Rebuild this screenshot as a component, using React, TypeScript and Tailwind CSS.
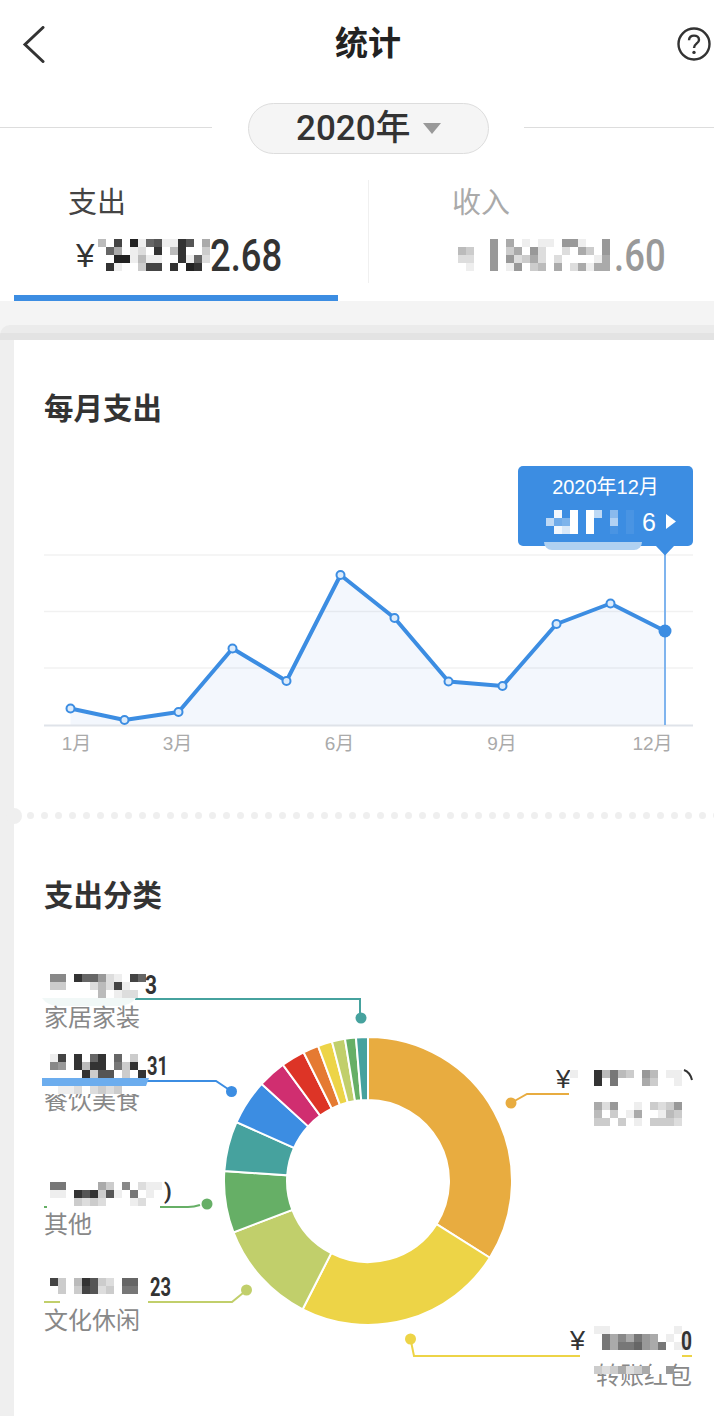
const FONT = "[font-family:'Liberation_Sans','Noto_Sans_CJK_SC',sans-serif]";
const NUM = "[font-family:'Roboto','Liberation_Sans',sans-serif]";
const YEAR = "[font-family:'Roboto','Noto_Sans_CJK_SC',sans-serif]";
const CELL = 8;

// each char is a grey level, 0 = black, f = white; "." is a hole
function Cells({ rows, x = 0, y = 0, light = false }: { rows: string[]; x?: number; y?: number; light?: boolean }) {
  return (
    <g>
      {rows.flatMap((row, r) =>
        row.split("").map((c, i) => {
          if (c === ".") return null;
          const lv = parseInt(c, 16);
          const g = lv * 17;
          return (
            <rect
              key={`${r}-${i}`}
              x={x + i * CELL}
              y={y + r * CELL}
              width={CELL}
              height={CELL}
              fill={light ? "#fff" : `rgb(${g},${g},${g})`}
              fillOpacity={light ? lv / 15 : 1}
            />
          );
        })
      )}
    </g>
  );
}

function Mosaic({ rows, light = false }: { rows: string[]; light?: boolean }) {
  return (
    <svg width={rows[0].length * CELL} height={rows.length * CELL} className="block shrink-0">
      <Cells rows={rows} light={light} />
    </svg>
  );
}

const points: [number, number][] = [
  [70.5, 708.5], [124.5, 720], [178.5, 712], [232.5, 648.5], [286.5, 681], [340.5, 575],
  [394.5, 618], [448.5, 681.5], [502.5, 686], [556.5, 624], [610.5, 603.5], [665, 631],
];

function LineChart() {
  const line = points.map((p) => p.join(",")).join(" ");
  const area = `70.5,725 ${line} 665,725`;
  return (
    <div className="relative mt-[31px] h-[330px]">
      <svg width="700" height="330" viewBox="14 460 700 330" className="block">
        <polygon points={area} fill="#f3f7fd" />
        {[555, 611.5, 668].map((y) => (
          <line key={y} x1="44" x2="693" y1={y} y2={y} stroke="#000" strokeOpacity="0.055" strokeWidth="1.4" />
        ))}
        <line x1="44" x2="693" y1="725.5" y2="725.5" stroke="#dfe3e9" strokeWidth="2" />
        <line x1="665" x2="665" y1="550" y2="725" stroke="#7fb4ee" strokeWidth="2" />
        <polyline points={line} fill="none" stroke="#3c8de2" strokeWidth="4" strokeLinejoin="round" />
        {points.slice(0, 11).map(([x, y]) => (
          <circle key={x} cx={x} cy={y} r="4" fill="#dcebfb" stroke="#3c8de2" strokeWidth="2" />
        ))}
        <circle cx="665" cy="631" r="6.5" fill="#3c8de2" />
        {[["1月", 76.5], ["3月", 177.5], ["6月", 339.5], ["9月", 502], ["12月", 652.5]].map(([t, x]) => (
          <text key={t} x={x} y="750" textAnchor="middle" className="fill-[#aaaaaa] text-[19px]">
            {t}
          </text>
        ))}
      </svg>
      <div className="absolute left-[504px] top-[6px] w-[175px] h-[80px] rounded-[5px] bg-[#3c8de2] text-white">
        <div className="text-center text-[20px] leading-[24px] pt-[9px]">2020年12月</div>
        <div className="flex items-center pl-[28px] mt-[11px] h-[24px]">
          <Mosaic rows={["0e0f0fa06010", "a45f0f009010", "0ecf0f001010"]} light />
          <span className="w-[13px] text-[25px] leading-none">6</span>
          <svg width="12" height="16" viewBox="0 0 12 16" className="ml-[10px] shrink-0">
            <path d="M1 0 L11 7.5 L1 15 Z" fill="#fff" />
          </svg>
        </div>
        <div className="absolute left-[26px] top-[76px] w-[98px] h-[8px] rounded-b-[8px] bg-[#b0d1f1]" />
        <svg width="18" height="10" viewBox="0 0 18 10" className="absolute left-[138px] top-[80px]">
          <path d="M0 0 L18 0 L9 9.5 Z" fill="#3c8de2" />
        </svg>
      </div>
    </div>
  );
}

const CX = 368;
const CY = 1181;
const slices: [number, string][] = [
  [122.2, "#e8ac40"], [207, "#edd447"], [249.1, "#c1cf6b"], [274, "#66af66"], [294.1, "#46a29e"],
  [312.4, "#3c8de2"], [323.8, "#d02e70"], [333.4, "#dd3426"], [339.7, "#e57a32"], [345.5, "#edd447"],
  [350.8, "#c1cf6b"], [355.2, "#66af66"], [360, "#46a29e"],
];

function arc(a0: number, a1: number) {
  const R = 144;
  const r = 81;
  const p = (rad: number, deg: number) => {
    const t = (deg * Math.PI) / 180;
    return `${(CX + rad * Math.sin(t)).toFixed(2)} ${(CY - rad * Math.cos(t)).toFixed(2)}`;
  };
  const big = a1 - a0 > 180 ? 1 : 0;
  return `M${p(R, a0)} A${R} ${R} 0 ${big} 1 ${p(R, a1)} L${p(r, a1)} A${r} ${r} 0 ${big} 0 ${p(r, a0)} Z`;
}

function Donut() {
  let prev = 0;
  return (
    <svg width="700" height="500" viewBox="14 916 700 500" className="block">
      {slices.map(([end, color]) => {
        const d = arc(prev, end);
        prev = end;
        return <path key={end} d={d} fill={color} stroke="#fff" strokeWidth="2" />;
      })}

      {/* 家居家装 */}
      <path d="M135 999 H360 V1013" fill="none" stroke="#46a29e" strokeWidth="2" />
      <circle cx="361" cy="1018" r="5.5" fill="#46a29e" />
      <Cells x={50} y={974} rows={["88f3669def46", "ccfffdbd4eff", "ffffffbfeddf"]} />
      <path d="M42 998 H136 Q130 1006 118 1006 H58 Q48 1006 42 998 Z" fill="#f1f8f7" />
      <text x="145" y="994" textLength="12" lengthAdjust="spacingAndGlyphs" className={`${NUM} fill-[#333333] text-[26px] font-bold`}>3</text>
      <text x="44" y="1026" className="fill-[#888888] text-[24px]">家居家装</text>

      {/* 餐饮美食 */}
      <path d="M147 1081 H216 L228 1089" fill="none" stroke="#3c8de2" strokeWidth="2" />
      <circle cx="231.5" cy="1091.5" r="5.5" fill="#3c8de2" />
      <text x="44" y="1109" className="fill-[#888888] text-[24px]">餐饮美食</text>
      <Cells x={50} y={1054} rows={["e4f3f63f6fcf", "89f3b33f7c3f", "ffff3c55fcf3"]} />
      <text x="147" y="1075" textLength="21" lengthAdjust="spacingAndGlyphs" className={`${NUM} fill-[#333333] text-[26px] font-bold`}>31</text>
      <Cells x={42} y={1086} rows={["ffeedfdcdcfffff"]} />
      <path d="M42 1078 H149 L146 1086 H42 Z" fill="#6cadee" />

      {/* 其他 */}
      <path d="M44 1207 H47 M160 1207 H188 Q194 1207 200 1205" fill="none" stroke="#66af66" strokeWidth="2" />
      <circle cx="207" cy="1204" r="5.5" fill="#66af66" />
      <Cells x={50} y={1182} rows={["77ffffacf8fdee", "eef353c5ef7fef", "fffcdcdfffedff"]} />
      <text x="164" y="1199" className={`${NUM} fill-[#333333] text-[22px] font-bold`}>)</text>
      <text x="44" y="1233" className="fill-[#888888] text-[24px]">其他</text>

      {/* 文化休闲 */}
      <path d="M44 1302 H60 M148 1302 H232 L243 1293" fill="none" stroke="#c1cf6b" strokeWidth="2" />
      <circle cx="246.5" cy="1290" r="5.5" fill="#c1cf6b" />
      <Cells x={50} y={1278} rows={["4cfb35cdf66ff", "fcfc45dcf77f."]} />
      <text x="150" y="1296" textLength="21" lengthAdjust="spacingAndGlyphs" className={`${NUM} fill-[#333333] text-[26px] font-bold`}>23</text>
      <text x="44" y="1329" className="fill-[#888888] text-[24px]">文化休闲</text>

      {/* 转账红包 */}
      <path d="M410.5 1339 L414 1356 H580 M682 1356 H692" fill="none" stroke="#edd447" strokeWidth="2" />
      <circle cx="410.5" cy="1339" r="5.5" fill="#edd447" />
      <text x="570" y="1350" className="fill-[#333333] text-[27px]">¥</text>
      <Cells x={594} y={1326} rows={["eeffffffffef", "f7a8a79afefd", "f7a7769a7fed"]} />
      <text x="681" y="1350" textLength="11" lengthAdjust="spacingAndGlyphs" className={`${NUM} fill-[#333333] text-[26px] font-bold`}>0</text>
      <text x="692" y="1384" textAnchor="end" className="fill-[#888888] text-[24px]">转账红包</text>
      <Cells x={594} y={1366} rows={["cdcadcaff9"]} />

      {/* top right */}
      <path d="M511 1103 L527 1094 H569" fill="none" stroke="#e8ac40" strokeWidth="2" />
      <circle cx="511" cy="1103" r="5.5" fill="#e8ac40" />
      <text x="556" y="1088" className="fill-[#333333] text-[26px]">¥</text>
      <Cells x={570} y={1070} rows={["eff3b7bcf9bfee", "fff3f7fffacffe"]} />
      <path d="M684 1070 Q690 1072 692 1080" fill="none" stroke="#333" strokeWidth="2" />
      <Cells x={594} y={1102} rows={["ad9ffefcdc9", "bfcfeaffebc", "ccfcfefcccd"]} />
    </svg>
  );
}

export default function App() {
  return (
    <div className={`${FONT} w-[714px] h-[1416px] overflow-hidden bg-white text-[#333333]`}>
      <header className="flex h-[88px] items-center">
        <div className="w-[82px] pl-[22px]">
          <svg width="24" height="37" viewBox="0 0 24 37" className="block">
            <path d="M21 1.5 L3 18.5 L21 35.5" fill="none" stroke="#333" strokeWidth="3" strokeLinecap="round" />
          </svg>
        </div>
        <h1 className="flex-1 text-center text-[33px] font-bold text-[#222222]">统计</h1>
        <div className="flex w-[60px] justify-end pr-[3px]">
          <svg width="34" height="34" viewBox="0 0 34 34" className="block">
            <circle cx="17" cy="17" r="15.5" fill="none" stroke="#333" strokeWidth="2.4" />
            <path d="M12 13.2 C12 10.2 14.2 8.6 17 8.6 C19.8 8.6 22 10.3 22 13 C22 16.4 17 16.6 17 21" fill="none" stroke="#333" strokeWidth="2.4" />
            <circle cx="17" cy="25.4" r="1.7" fill="#333" />
          </svg>
        </div>
      </header>

      <div className="mt-[15px] flex h-[51px] items-center">
        <div className="mb-[3px] h-px w-[212px] bg-[#dddddd]" />
        <button className="ml-[36px] flex h-[51px] w-[241px] items-center rounded-full border border-[#dddddd] bg-[#f5f5f5] pl-[47px]">
          <span className={`${YEAR} text-[35px] font-medium leading-none text-[#333333]`}>2020年</span>
          <svg width="18" height="12" viewBox="0 0 18 12" className="ml-[12px] shrink-0">
            <path d="M0 0 H18 L9 11 Z" fill="#999" />
          </svg>
        </button>
        <div className="mb-[3px] ml-[35px] h-px flex-1 bg-[#dddddd]" />
      </div>

      <div className="flex h-[147px]">
        <div className="ml-[14px] flex w-[354px] flex-col">
          <div className="pl-[54px] pt-[29px] text-[29px] leading-[40px] text-[#444444]">支出</div>
          <div className="mt-[16px] flex h-[32px] items-center pl-[62px]">
            <span className="w-[22px] text-[33px] leading-none text-[#333333]">¥</span>
            <Mosaic rows={["bf4f2e65ee35fa", "f6afedf3fb3ffc", "ff22ebeeff3e6d", "f3effc44f3f23f"]} />
            <span className={`${NUM} inline-block origin-left scale-x-[0.81] text-[45px] font-medium leading-none text-[#333333]`}>2.68</span>
          </div>
          <div className="mt-auto h-[6px] w-[324px] bg-[#3c8de2]" />
        </div>
        <div className="mt-[26px] h-[103px] w-px bg-[#f0f0f0]" />
        <div className="flex flex-1 flex-col pl-[83px]">
          <div className="pt-[29px] text-[29px] leading-[40px] text-[#aaaaaa]">收入</div>
          <div className="mt-[16px] flex h-[32px] items-center pl-[6px]">
            <Mosaic rows={["ffff9fafefeef99eff9", "bcff9fcaf9dffdfacf9", "ddff9f9dcadfdffffea", "feff9fe9fcbfafdaeaa"]} />
            <span className={`${NUM} inline-block origin-left scale-x-[0.81] pl-[5px] text-[45px] font-medium leading-none text-[#999999]`}>.60</span>
          </div>
        </div>
      </div>

      <div className="h-[1115px] bg-[#f4f4f4] pt-[24px]">
        <div className="h-[15px] rounded-tl-[10px] border-b-[7px] border-[#e3e3e3] bg-[#ebebeb]" />
        <div className="flex h-[1076px]">
          <div className="w-[14px] shrink-0 bg-[#efefef]" />
          <div className="flex-1 bg-white">
            <section>
              <h2 className="pl-[30px] pt-[49px] text-[29.5px] font-bold leading-[40px] text-[#333333]">每月支出</h2>
              <LineChart />
            </section>
            <div className="relative mt-[22px] flex h-[7px] gap-[7px] pl-[13px]">
              <div className="absolute left-[-8px] top-[-4.5px] h-[16px] w-[16px] rounded-full bg-[#efefef]" />
              {Array.from({ length: 50 }, (_, i) => (
                <div key={i} className="h-[7px] w-[7px] shrink-0 rounded-full bg-[#efefef]" />
              ))}
            </div>
            <section>
              <h2 className="pl-[30px] pt-[57px] text-[29.5px] font-bold leading-[40px] text-[#333333]">支出分类</h2>
              <Donut />
            </section>
          </div>
        </div>
      </div>
    </div>
  );
}
